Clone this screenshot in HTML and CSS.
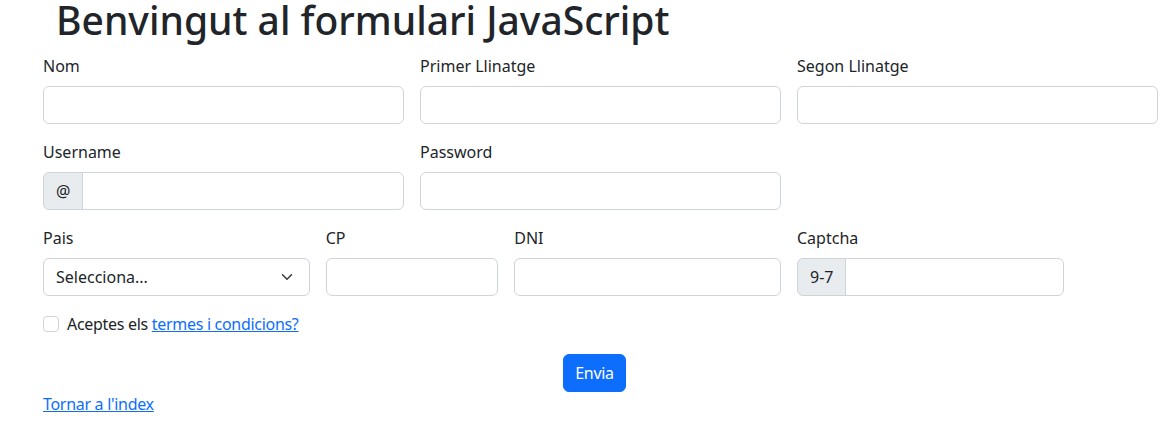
FILE: index.html
```html
<!DOCTYPE html>
<html lang="ca">
<head>
<meta charset="utf-8">
<title>Formulari JavaScript</title>
<link rel="stylesheet" href="styles.css">
</head>
<body>
<h1 class="title">Benvingut al formulari JavaScript</h1>
<form class="form">
  <div class="grid">
    <div class="field c4">
      <label class="label">Nom</label>
      <input class="control" type="text">
    </div>
    <div class="field c4">
      <label class="label">Primer Llinatge</label>
      <input class="control" type="text">
    </div>
    <div class="field c4">
      <label class="label">Segon Llinatge</label>
      <input class="control" type="text">
    </div>

    <div class="field c4">
      <label class="label">Username</label>
      <div class="group">
        <span class="addon addon-at">@</span>
        <input class="control grouped" type="text">
      </div>
    </div>
    <div class="field c4">
      <label class="label">Password</label>
      <input class="control" type="password">
    </div>
    <div class="field c4 empty"></div>

    <div class="field c3">
      <label class="label">Pais</label>
      <div class="select">
        <span>Selecciona...</span>
        <svg class="chev" width="16" height="16" viewBox="0 0 16 16"><path d="M2 5l6 6 6-6" fill="none" stroke="#343a40" stroke-width="2" stroke-linecap="round" stroke-linejoin="round"/></svg>
      </div>
    </div>
    <div class="field c2">
      <label class="label">CP</label>
      <input class="control" type="text">
    </div>
    <div class="field c3">
      <label class="label">DNI</label>
      <input class="control" type="text">
    </div>
    <div class="field c3">
      <label class="label">Captcha</label>
      <div class="group">
        <span class="addon addon-cap">9-7</span>
        <input class="control grouped" type="text">
      </div>
    </div>

    <div class="check c12">
      <span class="box"></span>
      <span>Aceptes els <a class="link" href="#">termes i condicions?</a></span>
    </div>

    <div class="actions c12">
      <button class="btn" type="button">Envia</button>
    </div>
  </div>
</form>
<a class="link back" href="#">Tornar a l'index</a>
</body>
</html>
```
FILE: styles.css
```css
* { box-sizing: border-box; }
body {
  margin: 0;
  font-family: "Noto Sans", "Open Sans", sans-serif;
  font-size: 16px;
  line-height: 1.5;
  color: #212529;
  background: #fff;
}
.title {
  margin: 0;
  padding-left: 56px;
  font-size: 39px;
  font-weight: 500;
  line-height: 40px;
}
.form {
  padding: 14px 5px 0 43px;
}
.grid {
  display: grid;
  grid-template-columns: repeat(12, 1fr);
  column-gap: 16px;
  row-gap: 16px;
}
.c2 { grid-column: span 2; }
.c3 { grid-column: span 3; }
.c4 { grid-column: span 4; }
.c12 { grid-column: span 12; }
.field { display: flex; flex-direction: column; }
.label { display: block; margin-bottom: 8px; line-height: 24px; }
.control {
  display: block;
  width: 100%;
  height: 38px;
  padding: 6px 12px;
  font: inherit;
  color: #212529;
  background: #fff;
  border: 1px solid #ced4da;
  border-radius: 6px;
  outline: none;
}
.group { display: flex; height: 38px; }
.addon {
  display: flex;
  align-items: center;
  padding: 6px 12px;
  background: #e9ecef;
  border: 1px solid #ced4da;
  border-radius: 6px 0 0 6px;
  white-space: nowrap;
}
.grouped {
  flex: 1;
  min-width: 0;
  border-radius: 0 6px 6px 0;
  margin-left: -1px;
}
.select {
  display: flex;
  align-items: center;
  justify-content: space-between;
  height: 38px;
  padding: 6px 16px 6px 12px;
  border: 1px solid #ced4da;
  border-radius: 6px;
}
.chev { width: 12px; height: 12px; }
.check {
  display: flex;
  align-items: center;
  gap: 8px;
  letter-spacing: -0.3px;
}
.box {
  width: 16px;
  height: 16px;
  border: 1px solid #ced4da;
  border-radius: 4px;
  background: #fff;
}
.link { color: #0d6efd; text-decoration: underline; }
.actions {
  display: flex;
  justify-content: center;
  padding-right: 12px;
  padding-top: 2px;
}
.btn {
  height: 38px;
  padding: 6px 11px;
  font: inherit;
  letter-spacing: -0.3px;
  color: #fff;
  background: #0d6efd;
  border: 1px solid #0d6efd;
  border-radius: 6px;
}
.back {
  display: inline-block;
  margin: 0 0 0 43px;
  letter-spacing: -0.3px;
}
```
